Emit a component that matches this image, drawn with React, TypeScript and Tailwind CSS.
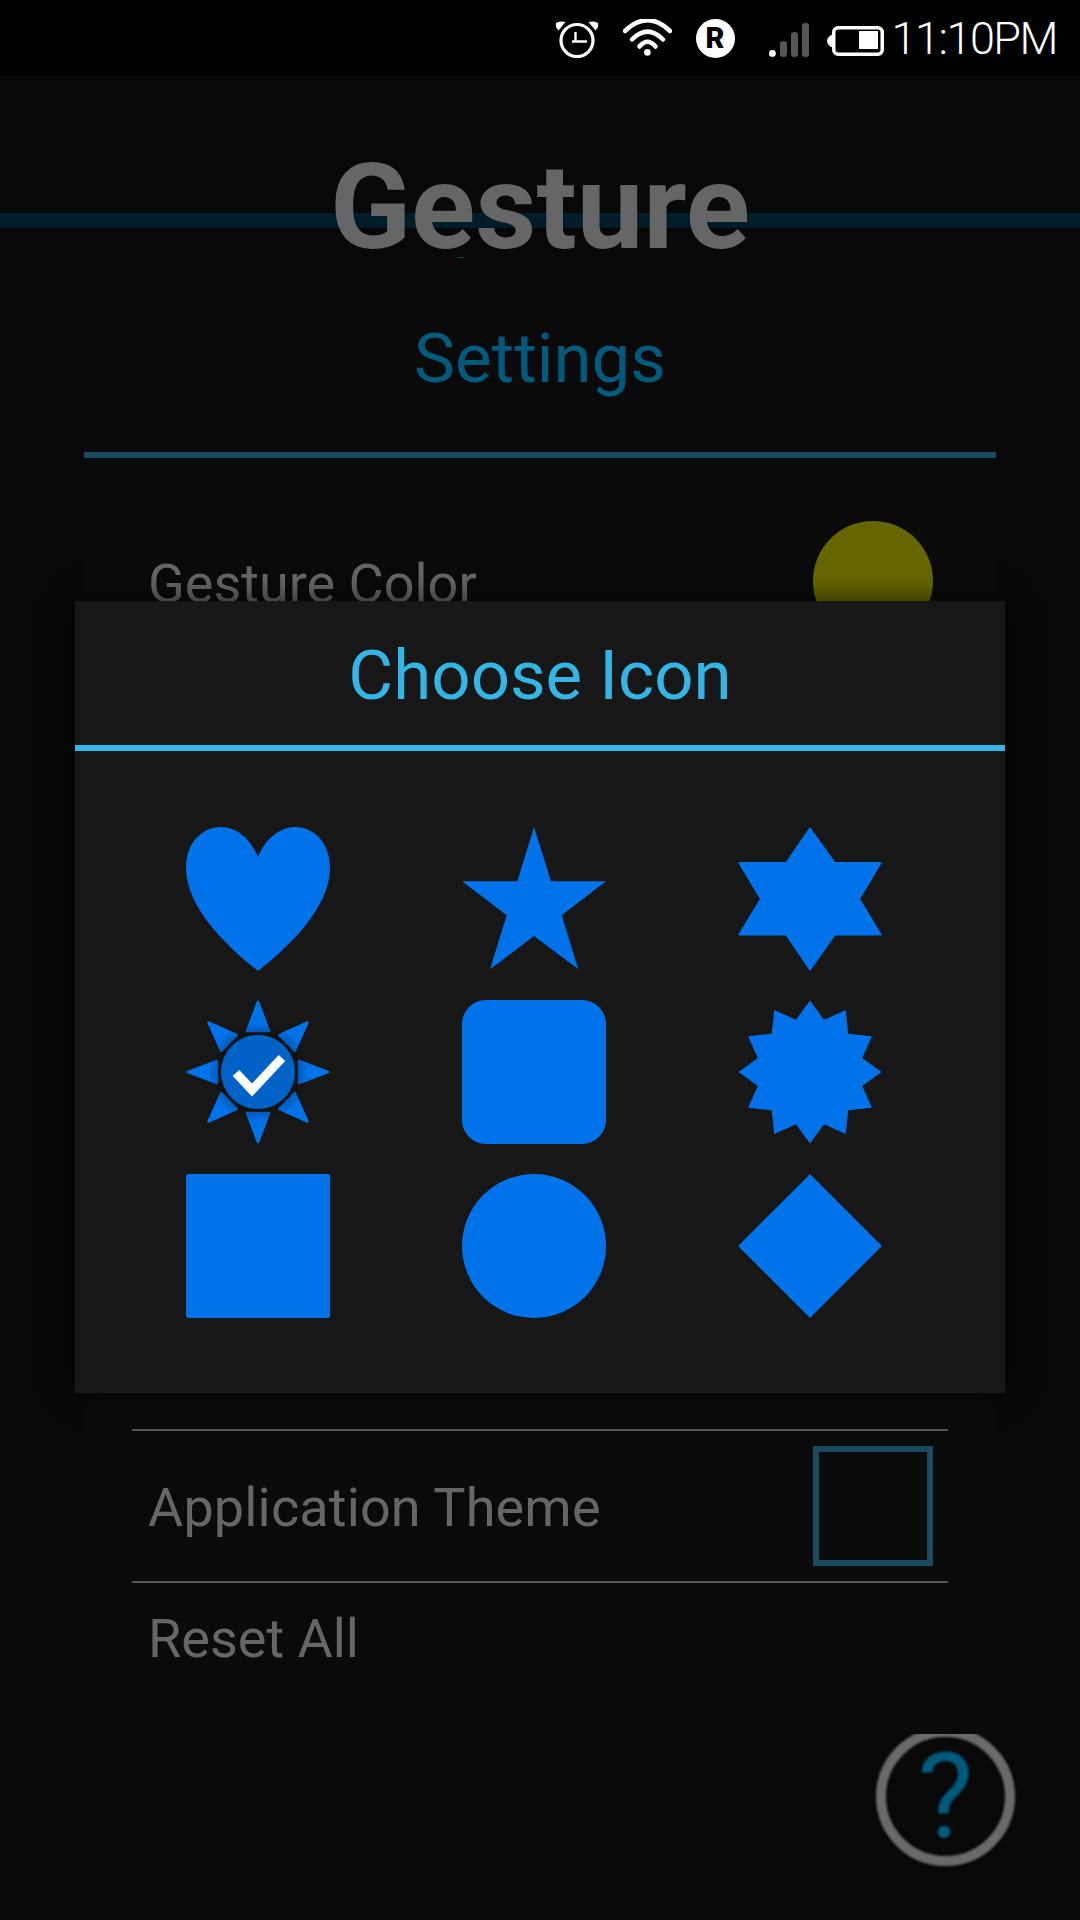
const BLUE = "#0073ea";

function StatusBar() {
  return (
    <div className="flex h-[75px] items-start justify-end bg-black pr-[23px] pt-[19px]">
      {/* alarm */}
      <svg width="44" height="39" viewBox="0 -1 44 39" fill="white">
        <circle cx="22" cy="20.5" r="16" fill="none" stroke="white" strokeWidth="3.2" />
        <path d="M20.5 12V21.5M17 21.5H32" fill="none" stroke="white" strokeWidth="2.4" />
        <path d="M1 3Q4 .5 10.5 2L3.5 10.5Q0 7 1 3Z" />
        <path d="M43 3Q40 .5 33.5 2L40.5 10.5Q44 7 43 3Z" />
      </svg>
      {/* wifi */}
      <svg className="ml-[24px]" width="49" height="39" viewBox="0 0 49 39" fill="none" stroke="white" strokeLinecap="round">
        <path d="M2 12Q24.5 -9.5 47 12" strokeWidth="4.5" />
        <path d="M9 20.5Q24.5 5 40 20.5" strokeWidth="4.5" />
        <path d="M16.5 27.5Q24.5 18 32.5 27.5" strokeWidth="4.5" />
        <circle cx="24.4" cy="33.4" r="3.3" fill="white" stroke="none" />
      </svg>
      <div className="ml-[24px] flex h-[39px] w-[39px] items-center justify-center rounded-full bg-white text-[29px] font-black leading-none text-black">
        R
      </div>
      {/* signal */}
      <svg className="ml-[34px]" width="40" height="39" viewBox="0 0 40 39">
        <circle cx="3.4" cy="34.4" r="3.4" fill="white" />
        <rect x="11" y="22" width="7" height="16" rx="3" fill="#555" />
        <rect x="22" y="13" width="7" height="25" rx="3" fill="#555" />
        <rect x="33" y="4" width="7" height="34" rx="3" fill="#555" />
      </svg>
      {/* battery */}
      <svg className="ml-[18px]" width="57" height="39" viewBox="0 0 57 39">
        <path d="M7 16H4Q0 19 0 22Q0 25 4 28H7Z" fill="white" />
        <rect x="6.75" y="8.75" width="48.5" height="26.5" rx="4.5" fill="black" stroke="white" strokeWidth="3.5" />
        <rect x="32" y="12" width="19" height="18" fill="white" />
      </svg>
      <span className="ml-[8px] text-[45px] font-light leading-[39px] tracking-[-1.5px] text-white">11:10PM</span>
    </div>
  );
}

function Divider() {
  return <div className="mx-[48px] h-[2px] bg-[#555555]" />;
}

function Settings() {
  return (
    <>
      <div className="relative flex h-[183px] justify-center">
        <div className="absolute left-0 right-0 top-[138px] h-[15px] bg-[#001c28]" />
        <h1 className="relative mt-[68px] text-[119px] font-bold leading-[130px] text-[#666666]">Gesture</h1>
        <div className="absolute left-[458px] top-[182px] h-[3px] w-[6px] bg-[#0a4a20]" />
      </div>
      <div className="relative z-10 mx-[84px] flex h-[1476px] flex-col bg-[#0a0a0a]">
        <div className="flex h-[194px] items-center justify-center pt-[7px] text-[69px] leading-none text-[#005a7c]">Settings</div>
        <div className="h-[6px] bg-[#194a5f]" />
        <div className="mt-[63px] flex h-[120px] items-center justify-between pl-[64px] pr-[63px]">
          <span className="pt-[4px] text-[54px] text-[#666666]">Gesture Color</span>
          <div className="h-[120px] w-[120px] rounded-full bg-[#666600]" />
        </div>
        <div className="h-[788px]" />
        <Divider />
        <div className="flex h-[150px] items-center justify-between pl-[64px] pr-[63px]">
          <span className="pt-[2px] text-[54px] tracking-[0.15px] text-[#666666]">Application Theme</span>
          <div className="h-[120px] w-[120px] border-[6px] border-[#194a5f]" />
        </div>
        <Divider />
        <div className="flex h-[111px] items-center pl-[64px]">
          <span className="text-[54px] text-[#666666]">Reset All</span>
        </div>
      </div>
      <div className="-mt-[7px] ml-[876px] flex h-[139px] w-[139px] items-center justify-center rounded-full border-[10px] border-[#6a6a6a] text-[118px] font-normal leading-none text-[#005a7c] blur-[1px]">
        ?
      </div>
    </>
  );
}

function Heart() {
  return (
    <svg width="144" height="144" viewBox="0 0 144 144" fill={BLUE}>
      <path d="M72 30C64 11 50 0 35 0C15 0 0 17 0 41C0 82 44 122 72 144C100 122 144 82 144 41C144 17 129 0 109 0C94 0 80 11 72 30Z" />
    </svg>
  );
}

function Star() {
  return (
    <svg width="144" height="144" viewBox="0 0 144 144" fill={BLUE}>
      <polygon points="72,0 89,54.3 144,54.3 99.7,88.3 116.3,142.3 72,109 28,142.3 44.7,88.3 0,54.3 55.3,54.3" />
    </svg>
  );
}

function SixStar() {
  return (
    <svg width="144" height="144" viewBox="0 0 144 144" fill={BLUE} stroke={BLUE} strokeWidth="2" strokeLinejoin="round">
      <polygon points="72,1.5 96.7,36 142.5,36 121,72 142.5,107.5 96.7,107.5 72,142.5 48.3,107.5 1.5,107.5 23,72 1.5,36 48.3,36" />
    </svg>
  );
}

function Sun() {
  const rays = [0, 45, 90, 135, 180, 225, 270, 315];
  return (
    <svg width="144" height="144" viewBox="-72 -72 144 144">
      <defs>
        <radialGradient id="rayShade" gradientUnits="userSpaceOnUse" cx="0" cy="0" r="50">
          <stop offset="0.74" stopColor="#000" stopOpacity="0.3" />
          <stop offset="1" stopColor="#000" stopOpacity="0" />
        </radialGradient>
      </defs>
      {rays.map((a) => (
        <polygon
          key={a}
          points="0,-70 11,-41 -11,-41"
          transform={`rotate(${a})`}
          fill={BLUE}
          stroke={BLUE}
          strokeWidth="2.5"
          strokeLinejoin="round"
        />
      ))}
      <circle r="50" fill="url(#rayShade)" />
      <circle r="38.5" fill="#171717" />
      <circle r="37" fill="#0062c6" />
      <path d="M-22 1L-6 18L24 -14" fill="none" stroke="white" strokeWidth="9" style={{ filter: "blur(0.5px)" }} />
    </svg>
  );
}

function RoundedSquare() {
  return <div className="h-[144px] w-[144px] rounded-[24px] bg-[#0073ea]" />;
}

function Burst() {
  const points: string[] = [];
  for (let i = 0; i < 24; i++) {
    const r = i % 2 === 0 ? 71.5 : 54;
    const a = (i * 15 * Math.PI) / 180;
    points.push(`${(r * Math.sin(a)).toFixed(1)},${(-r * Math.cos(a)).toFixed(1)}`);
  }
  return (
    <svg width="144" height="144" viewBox="-72 -72 144 144" fill={BLUE}>
      <polygon points={points.join(" ")} />
    </svg>
  );
}

function Square() {
  return <div className="h-[144px] w-[144px] rounded-[2px] bg-[#0073ea]" />;
}

function Circle() {
  return <div className="h-[144px] w-[144px] rounded-full bg-[#0073ea]" />;
}

function Diamond() {
  return (
    <svg width="144" height="144" viewBox="0 0 144 144" fill={BLUE} stroke={BLUE} strokeWidth="2" strokeLinejoin="round">
      <polygon points="72,1.5 142.5,72 72,142.5 1.5,72" />
    </svg>
  );
}

function IconDialog() {
  return (
    <div className="absolute left-[75px] top-[601px] z-20 flex h-[792px] w-[930px] flex-col bg-[#171717] shadow-[0_0_26px_rgba(0,0,0,0.7)]">
      <div className="flex h-[144px] items-center justify-center pt-[4px] text-[69px] leading-none text-[#33b5e5]">Choose Icon</div>
      <div className="h-[6px] bg-[#33b5e5]" />
      <div className="grid grid-cols-[repeat(3,144px)] grid-rows-[144px_145px_144px] gap-x-[132px] gap-y-[29px] pl-[111px] pt-[76px]">
        <Heart />
        <Star />
        <SixStar />
        <Sun />
        <RoundedSquare />
        <Burst />
        <Square />
        <Circle />
        <Diamond />
      </div>
    </div>
  );
}

export default function App() {
  return (
    <div className="relative h-[1920px] w-[1080px] overflow-hidden bg-[#080808] font-['Roboto',sans-serif]">
      <StatusBar />
      <Settings />
      <IconDialog />
    </div>
  );
}
